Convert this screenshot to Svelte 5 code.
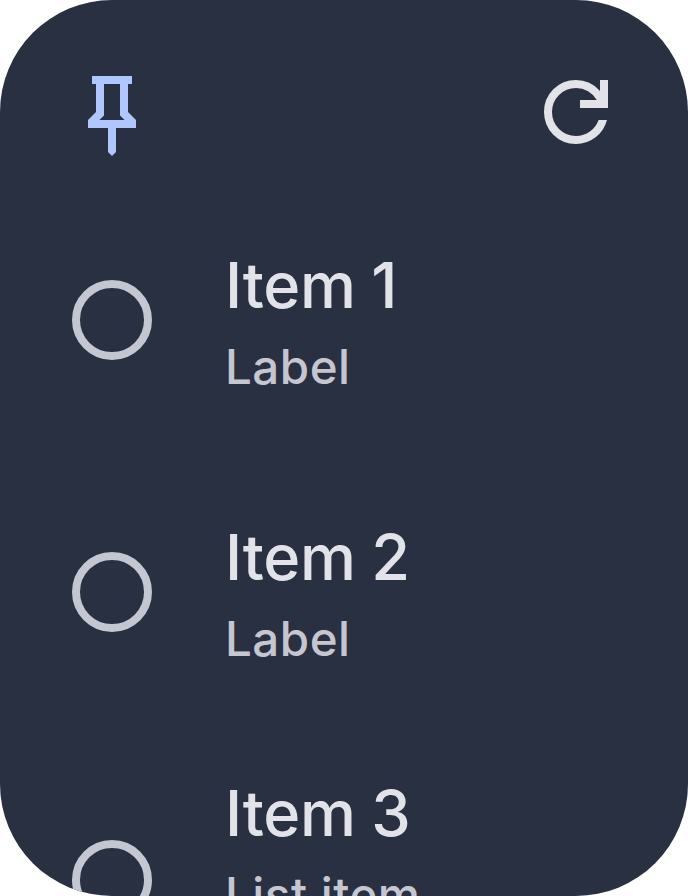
<script>
  const items = [
    { title: 'Item 1', label: 'Label' },
    { title: 'Item 2', label: 'Label' },
    { title: 'Item 3', label: 'List item', tall: true },
  ];
</script>

<main class="widget">
  <header>
    <svg class="icon pin" viewBox="0 -960 960 960" aria-hidden="true">
      <path d="m640-480 80 80v80H520v240l-40 40-40-40v-240H240v-80l80-80v-280h-40v-80h400v80h-40v280Zm-286 80h252l-46-46v-314H400v314l-46 46Z" />
    </svg>
    <svg class="icon refresh" viewBox="0 -960 960 960" aria-hidden="true">
      <path d="M480-160q-134 0-227-93t-93-227q0-134 93-227t227-93q69 0 132 28.5T720-690v-110h80v280H520v-80h168q-32-56-87.5-88T480-720q-100 0-170 70t-70 170q0 100 70 170t170 70q77 0 139-44t87-116h84q-28 106-114 173t-196 67Z" />
    </svg>
  </header>
  <ul>
    {#each items as item}
      <li class:tall={item.tall}>
        <span class="radio"></span>
        <div class="text">
          <div class="title">{item.title}</div>
          <div class="label">{item.label}</div>
        </div>
      </li>
    {/each}
  </ul>
</main>

<style>
  :global(body) {
    background: #fff;
    overflow: hidden;
  }
  .widget {
    box-sizing: border-box;
    width: 688px;
    height: 896px;
    overflow: hidden;
    border-radius: 112px;
    background: #293042;
    font-family: Inter, "Liberation Sans", sans-serif;
  }
  header {
    display: flex;
    justify-content: space-between;
    padding: 64px 64px 24px;
  }
  .icon {
    display: block;
    width: 96px;
    height: 96px;
  }
  .pin {
    fill: #b0c6ff;
  }
  .refresh {
    fill: #e2e2e9;
  }
  ul {
    list-style: none;
    margin: 0;
    padding: 0 72px;
  }
  li {
    box-sizing: border-box;
    display: flex;
    align-items: flex-start;
    gap: 73px;
    height: 272px;
    padding-top: 61px;
  }
  .radio {
    box-sizing: border-box;
    flex: none;
    width: 80px;
    height: 80px;
    margin-top: 35px;
    border: 8px solid #c4c6d0;
    border-radius: 50%;
  }
  .tall {
    padding-top: 45px;
  }
  .tall .radio {
    margin-top: 67px;
  }
  .text {
    white-space: nowrap;
  }
  .title {
    font-size: 63px;
    line-height: 80px;
    font-weight: 550;
    letter-spacing: -0.3px;
    word-spacing: -1px;
    color: #e2e2e9;
  }
  .label {
    margin-top: 10px;
    font-size: 47.5px;
    line-height: 64px;
    font-weight: 500;
    letter-spacing: 0.5px;
    color: #c4c6d0;
  }
</style>
